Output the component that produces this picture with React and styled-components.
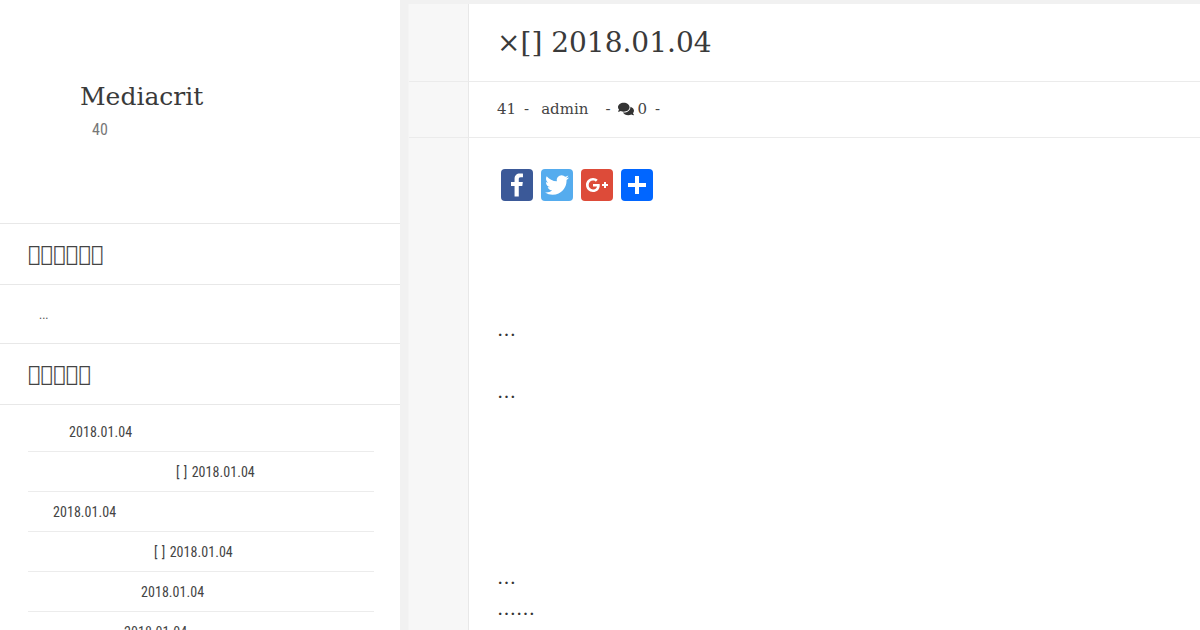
import React from "react";
import styled, { createGlobalStyle } from "styled-components";
import { FaComments } from "react-icons/fa";

const GlobalStyle = createGlobalStyle`
	html, body {
		margin: 0;
		padding: 0;
		height: 630px;
		overflow: hidden;
		background: #f1f1f1;
	}
`;

const serif = `"DejaVu Serif", serif`;
const condensed = `"Roboto Condensed", Roboto, sans-serif`;

const Page = styled.div`
	display: flex;
	width: 1200px;
	height: 630px;
	overflow: hidden;
	font-family: ${serif};
	color: #333;
`;

const Sidebar = styled.aside`
	flex: 0 0 400px;
	background: #fff;
`;

const Brand = styled.div`
	height: 223px;
	box-sizing: border-box;
	padding: 82px 0 0 80px;
`;

const BrandName = styled.div`
	font-size: 25px;
	line-height: 30px;
	color: #3a3a3a;
`;

const BrandCount = styled.div`
	margin: 8px 0 0 12px;
	font-family: ${condensed};
	font-stretch: condensed;
	font-size: 16px;
	line-height: 20px;
	color: #777;
`;

const WidgetTitle = styled.h3`
	margin: 0;
	height: 60px;
	padding-left: 28px;
	border-top: 1px solid #e8e8e8;
	border-bottom: 1px solid #e8e8e8;
	font-family: ${serif};
	font-weight: 400;
	font-size: 21px;
	line-height: 60px;
	color: #444;
`;

const WidgetNote = styled.div`
	height: 58px;
	padding-left: 39px;
	font-family: ${condensed};
	font-size: 12px;
	line-height: 60px;
	color: #555;
`;

const RecentList = styled.ul`
	margin: 0 26px 0 28px;
	padding: 7px 0 0;
	list-style: none;
`;

const RecentItem = styled.li`
	height: 39px;
	padding-left: ${(p) => p.$indent}px;
	border-bottom: 1px solid #ececec;
	font-family: ${condensed};
	font-stretch: condensed;
	font-size: 14px;
	letter-spacing: 0.05px;
	word-spacing: 1px;
	line-height: 40px;
	color: #444;
`;

const Main = styled.main`
	flex: 1;
	margin: 4px 0 0 8px;
	border-left: 1px solid #f4f4f4;
	display: grid;
	grid-template-columns: 60px 1fr;
	grid-template-rows: 78px 56px 1fr;
	background: #f7f7f7;
`;

const Gutter = styled.div`
	border-bottom: 1px solid #ebebeb;
	border-right: 1px solid #e8e8e8;
	&:nth-of-type(5) {
		border-bottom: 0;
	}
`;

const HeaderCell = styled.div`
	background: #fff;
	border-bottom: 1px solid #ebebeb;
	padding-left: 28px;
`;

const PostTitle = styled.h1`
	margin: 0;
	font-weight: 400;
	font-size: 28px;
	line-height: 77px;
	color: #3a3a3a;
`;

const Meta = styled.div`
	display: flex;
	align-items: center;
	height: 53px;
	font-size: 15px;
	color: #444;
`;

const MetaItem = styled.span`
	display: inline-flex;
	margin-left: ${(p) => p.$left || 0}px;
`;

const Content = styled.div`
	background: #fff;
	padding: 31px 0 0 28px;
`;

const ShareBar = styled.div`
	display: flex;
	gap: 8px;
	margin-left: 4px;
`;

const ShareButton = styled.svg`
	width: 32px;
	height: 32px;
	border-radius: 4px;
	background: ${(p) => p.$bg};
	fill: #fff;
`;

const Para = styled.p`
	margin: ${(p) => p.$top}px 0 0;
	font-size: 19px;
	line-height: 24px;
	color: #333;
`;

const shares = [
	{ bg: "#3b5998", d: "M17.78 27.5V17.008h3.522l.527-4.09h-4.05v-2.61c0-1.182.33-1.99 2.023-1.99h2.166V4.66c-.375-.05-1.66-.16-3.155-.16-3.123 0-5.26 1.905-5.26 5.405v3.016h-3.53v4.09h3.53V27.5h4.223z" },
	{ bg: "#55acee", d: "M28 8.557a9.913 9.913 0 0 1-2.828.775 4.93 4.93 0 0 0 2.166-2.725 9.738 9.738 0 0 1-3.13 1.194 4.92 4.92 0 0 0-3.593-1.55 4.924 4.924 0 0 0-4.794 6.049c-4.09-.21-7.72-2.17-10.15-5.15a4.942 4.942 0 0 0-.665 2.477c0 1.71.87 3.214 2.19 4.1a4.968 4.968 0 0 1-2.23-.616v.06c0 2.39 1.7 4.38 3.952 4.83-.414.115-.85.174-1.297.174-.318 0-.626-.03-.928-.086a4.935 4.935 0 0 0 4.6 3.42 9.893 9.893 0 0 1-6.114 2.107c-.398 0-.79-.023-1.175-.068a13.953 13.953 0 0 0 7.55 2.213c9.056 0 14.01-7.507 14.01-14.013 0-.213-.005-.426-.015-.637.96-.695 1.795-1.56 2.455-2.55z" },
	{ bg: "#dd4b39", d: "M27 15h-2v-2h-2v2h-2v2h2v2h2v-2h2m-15-2v2.4h3.97c-.16 1.03-1.2 3.02-3.97 3.02-2.39 0-4.34-1.98-4.34-4.42s1.95-4.42 4.34-4.42c1.36 0 2.27.58 2.79 1.08l1.9-1.83C15.47 9.69 13.89 9 12 9c-3.87 0-7 3.13-7 7s3.13 7 7 7c4.04 0 6.72-2.84 6.72-6.84 0-.46-.05-.81-.11-1.16H12z" },
	{ bg: "#0166ff", d: "M14 7h4v18h-4zM7 14h18v4H7z" },
];

const recent = [
	{ indent: 41, text: "2018.01.04" },
	{ indent: 148, text: "[ ] 2018.01.04" },
	{ indent: 25, text: "2018.01.04" },
	{ indent: 126, text: "[ ] 2018.01.04" },
	{ indent: 113, text: "2018.01.04" },
	{ indent: 96, text: "2018.01.04" },
];

const App = () => {
	return (
		<Page>
			<GlobalStyle />
			<Sidebar>
				<Brand>
					<BrandName>Mediacrit</BrandName>
					<BrandCount>40</BrandCount>
				</Brand>
				<WidgetTitle>{"\uE000\uE001\uE002\uE003\uE004\uE005"}</WidgetTitle>
				<WidgetNote>...</WidgetNote>
				<WidgetTitle>{"\uE000\uE001\uE002\uE003\uE004"}</WidgetTitle>
				<RecentList>
					{recent.map((r, i) => (
						<RecentItem key={i} $indent={r.indent}>
							{r.text}
						</RecentItem>
					))}
				</RecentList>
			</Sidebar>
			<Main>
				<Gutter />
				<HeaderCell>
					<PostTitle>×[] 2018.01.04</PostTitle>
				</HeaderCell>
				<Gutter />
				<HeaderCell>
					<Meta>
						<MetaItem>41</MetaItem>
						<MetaItem $left={8}>-</MetaItem>
						<MetaItem $left={12}>admin</MetaItem>
						<MetaItem $left={17}>-</MetaItem>
						<MetaItem $left={8}>
							<FaComments size={16} color="#333" />
						</MetaItem>
						<MetaItem $left={3}>0</MetaItem>
						<MetaItem $left={8}>-</MetaItem>
					</Meta>
				</HeaderCell>
				<Gutter />
				<Content>
					<ShareBar>
						{shares.map((s) => (
							<ShareButton key={s.bg} viewBox="0 0 32 32" $bg={s.bg}>
								<path d={s.d} />
							</ShareButton>
						))}
					</ShareBar>
					<Para $top={116}>…</Para>
					<Para $top={38}>…</Para>
					<Para $top={162}>…</Para>
					<Para $top={7}>……</Para>
				</Content>
			</Main>
		</Page>
	);
};

export default App;
